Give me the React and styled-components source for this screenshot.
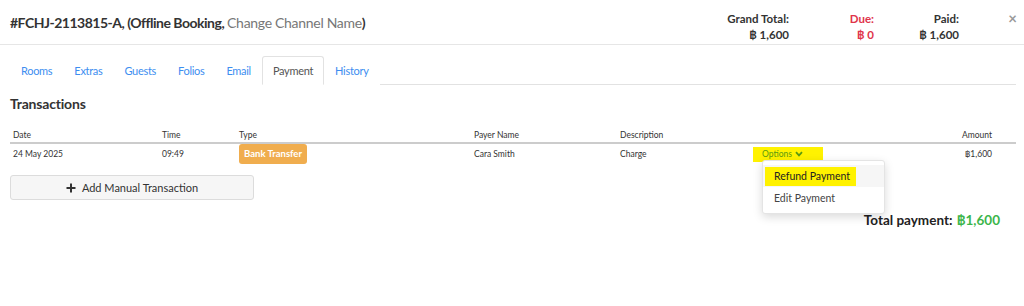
import styled, { createGlobalStyle } from "styled-components";

const Global = createGlobalStyle`
  body {
    margin: 0;
    background: #fff;
    font-family: "Lato", "Open Sans", sans-serif;
    color: #333;
  }
`;

const Header = styled.div`
  display: flex;
  align-items: center;
  height: 45px;
  padding-left: 10px;
  border-bottom: 1px solid #e6e6e6;
  box-sizing: border-box;
`;

const Title = styled.h4`
  margin: 0;
  font-size: 14px;
  font-weight: 700;
  color: #333;
  letter-spacing: -0.5px;

  span {
    color: #777;
    font-weight: 400;
    letter-spacing: -0.3px;
  }
`;

const Totals = styled.div`
  display: flex;
  margin-left: auto;
  margin-top: 9px;
`;

const TotalCol = styled.div`
  width: 85px;
  text-align: right;
  font-size: 11.5px;
  font-weight: 700;
  line-height: 16px;
  color: ${(p) => (p.$due ? "#e0344b" : "#333")};
`;

const Close = styled.button`
  width: 65px;
  height: 30px;
  margin-top: -8px;
  padding: 0 7px 0 0;
  border: none;
  background: none;
  text-align: right;
  font-family: inherit;
  font-size: 15px;
  font-weight: 700;
  color: #999;
`;

const Tabs = styled.ul`
  display: flex;
  list-style: none;
  margin: 11px 8px 0 10px;
  padding: 0;
  border-bottom: 1px solid #e2e2e2;
`;

const Tab = styled.li`
  height: 27px;
  padding: 0 10px;
  margin-bottom: -1px;
  display: flex;
  align-items: center;
  font-size: 11px;
  letter-spacing: -0.3px;
  color: ${(p) => (p.$active ? "#555" : "#3d8ef0")};
  background: #fff;
  border: 1px solid ${(p) => (p.$active ? "#e2e2e2" : "transparent")};
  border-bottom-color: ${(p) => (p.$active ? "#fff" : "transparent")};
  border-radius: 3px 3px 0 0;
`;

const Section = styled.div`
  padding: 0 8px 0 10px;
`;

const Heading = styled.h3`
  margin: 10px 0 0;
  font-size: 14px;
  font-weight: 700;
  color: #333;
  letter-spacing: -0.2px;
`;

const Row = styled.div`
  display: grid;
  grid-template-columns: 149px 77px 235px 146px 136px 1fr 120px;
  align-items: center;
  font-size: 8.5px;
  color: #333;
  ${(p) =>
    p.$head
      ? `
    margin-top: 16px;
    height: 14px;
    border-bottom: 2px solid #ccc;
  `
      : `
    height: 20px;
  `}

  & > div {
    padding-left: 3px;
  }
  & > div:last-child {
    text-align: right;
    padding-right: 24px;
  }
`;

const Badge = styled.span`
  display: inline-block;
  width: 68px;
  height: 20px;
  line-height: 20px;
  text-align: center;
  border-radius: 3px;
  background: #f0ad4e;
  color: #fff;
  font-size: 9.5px;
  font-weight: 700;
`;

const OptionsCell = styled.div`
  position: relative;
  padding-left: 0 !important;
`;

const Options = styled.span`
  display: inline-flex;
  align-items: center;
  gap: 3px;
  height: 15px;
  width: 61px;
  padding-left: 9px;
  background: #fff200;
  color: #5a9a12;
  font-size: 8.5px;
`;

const Menu = styled.div`
  position: absolute;
  top: 13px;
  left: 9px;
  width: 121px;
  padding: 4px 0;
  background: #fff;
  border: 1px solid #e4e4e4;
  border-radius: 3px;
  box-shadow: 0 3px 10px rgba(0, 0, 0, 0.15);
  z-index: 2;
`;

const MenuItem = styled.div`
  position: relative;
  height: 22px;
  line-height: 22px;
  padding-left: 11px;
  font-size: 10.5px;
  color: ${(p) => (p.$mark ? "#222" : "#444")};
  background: ${(p) => (p.$mark ? "#f6f6f6" : "transparent")};

  mark {
    background: #fff200;
    color: inherit;
    padding: 3px 6px 4px 9px;
    margin-left: -9px;
  }
`;

const AddButton = styled.button`
  display: flex;
  align-items: center;
  justify-content: center;
  gap: 6px;
  width: 244px;
  height: 25px;
  margin-top: 11px;
  border: 1px solid #dcdcdc;
  border-radius: 3px;
  background: #f6f6f6;
  font-family: inherit;
  font-size: 11px;
  color: #333;
`;

const TotalPayment = styled.div`
  display: flex;
  justify-content: flex-end;
  margin-top: 12px;
  padding-right: 16px;
  font-size: 13.5px;
  font-weight: 700;
  color: #222;

  span {
    color: #3cb54a;
    margin-left: 4px;
  }
`;

const tabs = ["Rooms", "Extras", "Guests", "Folios", "Email", "Payment", "History"];

export default function App() {
  return (
    <>
      <Global />
      <Header>
        <Title>
          #FCHJ-2113815-A, (Offline Booking, <span>Change Channel Name</span>)
        </Title>
        <Totals>
          <TotalCol>
            <div>Grand Total:</div>
            <div>฿ 1,600</div>
          </TotalCol>
          <TotalCol $due>
            <div>Due:</div>
            <div>฿ 0</div>
          </TotalCol>
          <TotalCol>
            <div>Paid:</div>
            <div>฿ 1,600</div>
          </TotalCol>
        </Totals>
        <Close>×</Close>
      </Header>

      <Tabs>
        {tabs.map((t) => (
          <Tab key={t} $active={t === "Payment"}>
            {t}
          </Tab>
        ))}
      </Tabs>

      <Section>
        <Heading>Transactions</Heading>
        <Row $head>
          <div>Date</div>
          <div>Time</div>
          <div>Type</div>
          <div>Payer Name</div>
          <div>Description</div>
          <div></div>
          <div>Amount</div>
        </Row>
        <Row>
          <div>24 May 2025</div>
          <div>09:49</div>
          <div>
            <Badge>Bank Transfer</Badge>
          </div>
          <div>Cara Smith</div>
          <div>Charge</div>
          <OptionsCell>
            <Options>
              Options
              <svg width="8" height="6" viewBox="0 0 8 6">
                <path d="M1 1.2 L4 4.4 L7 1.2" fill="none" stroke="#5a9a12" strokeWidth="1.8" />
              </svg>
            </Options>
            <Menu>
              <MenuItem $mark>
                <mark>Refund Payment</mark>
              </MenuItem>
              <MenuItem>Edit Payment</MenuItem>
            </Menu>
          </OptionsCell>
          <div>฿1,600</div>
        </Row>

        <AddButton>
          <svg width="10" height="10" viewBox="0 0 10 10">
            <path d="M5 0.5 V9.5 M0.5 5 H9.5" stroke="#333" strokeWidth="2" />
          </svg>
          Add Manual Transaction
        </AddButton>

        <TotalPayment>
          Total payment:<span>฿1,600</span>
        </TotalPayment>
      </Section>
    </>
  );
}
